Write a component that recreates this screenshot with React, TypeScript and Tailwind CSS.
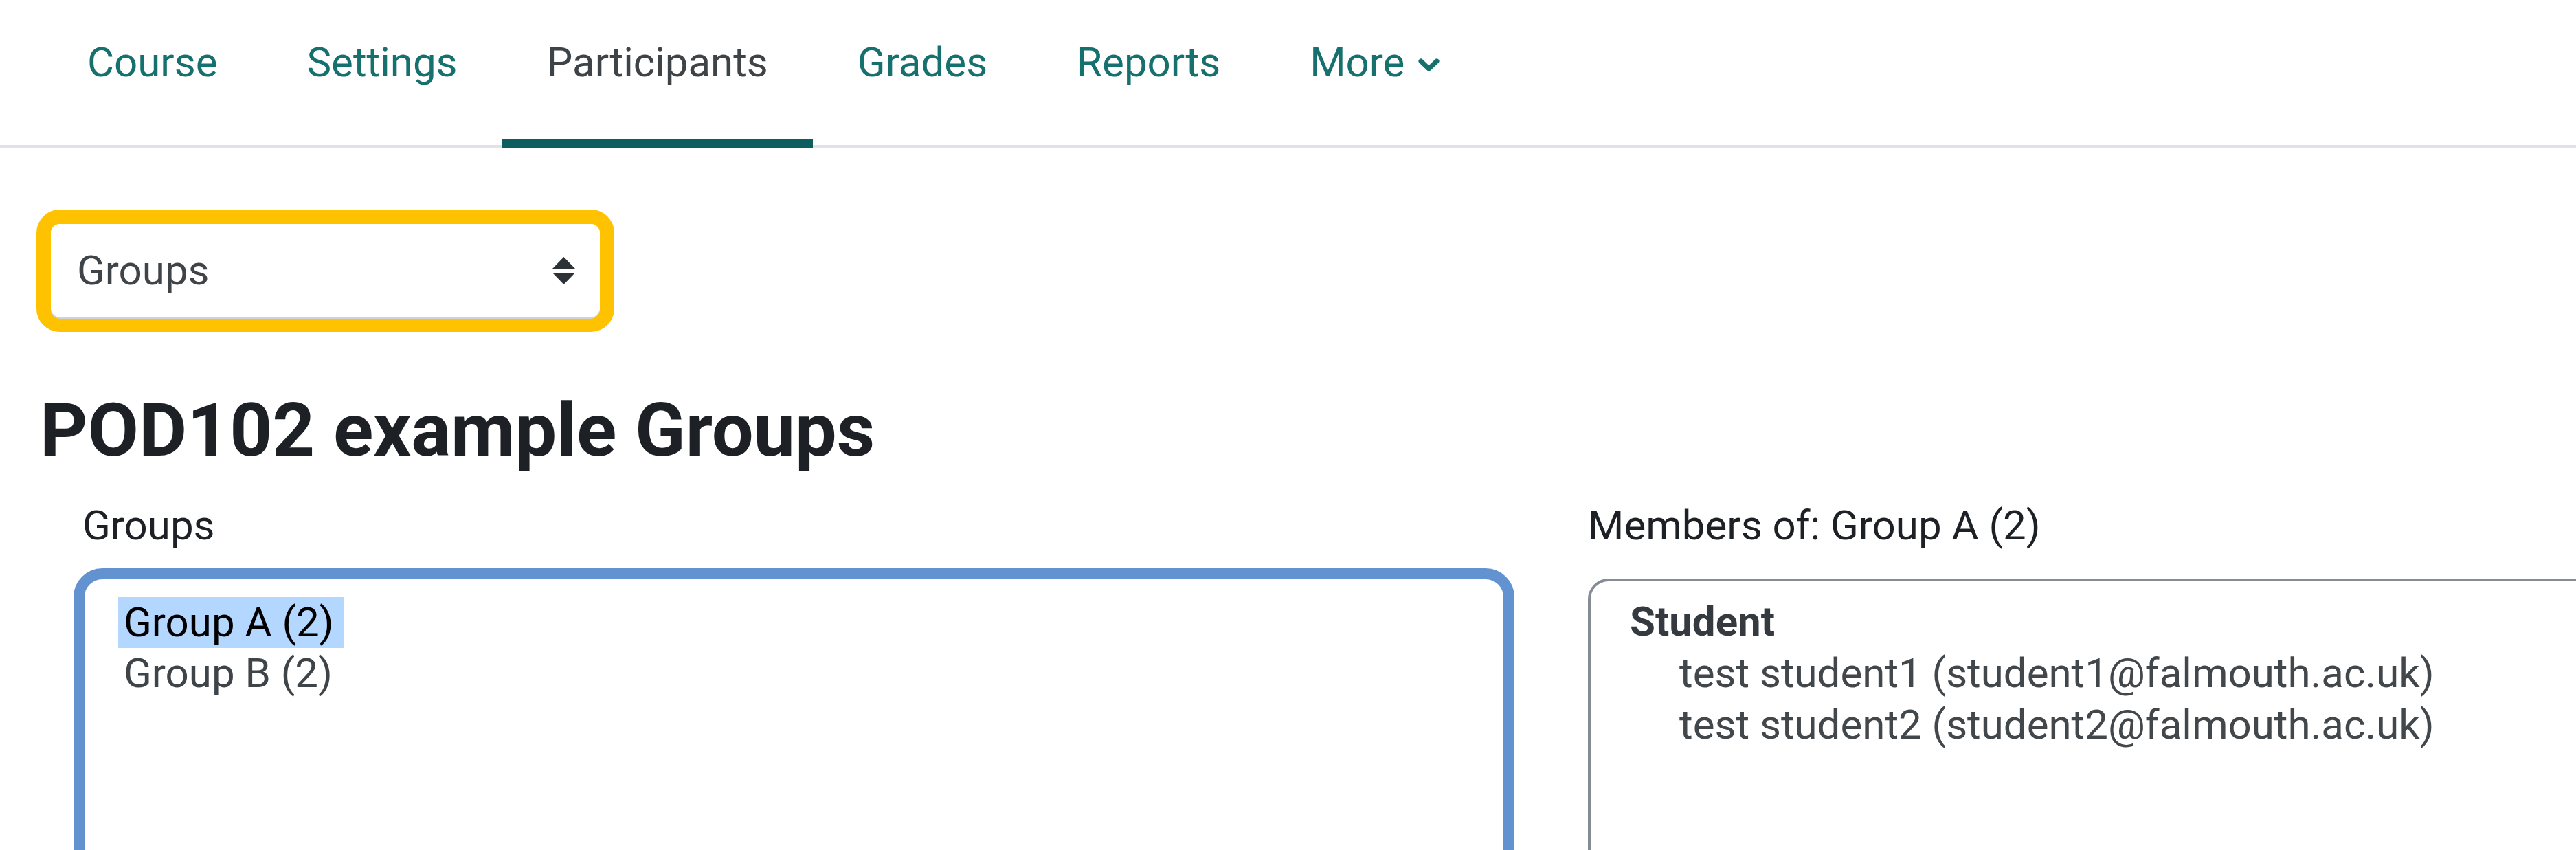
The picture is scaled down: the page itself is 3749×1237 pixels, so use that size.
import React from "react";

const navItems = [
  { label: "Course", active: false },
  { label: "Settings", active: false },
  { label: "Participants", active: true },
  { label: "Grades", active: false },
  { label: "Reports", active: false },
];

const SortArrows: React.FC = () => (
  <svg width="33" height="40" viewBox="0 0 33 40" className="shrink-0">
    <path d="M16.5 0 L33 17 L0 17 Z" fill="#2d3237" />
    <path d="M0 23 L33 23 L16.5 40 Z" fill="#2d3237" />
  </svg>
);

const Chevron: React.FC = () => (
  <svg width="31" height="20" viewBox="0 0 31 20" className="ml-[20px] mt-[8px]">
    <polyline
      points="4,4 15.5,15 27,4"
      fill="none"
      stroke="#16706d"
      strokeWidth="7"
      strokeLinecap="round"
      strokeLinejoin="round"
    />
  </svg>
);

const App: React.FC = () => {
  return (
    <div className="h-[1237px] w-full overflow-hidden bg-white font-['Roboto','Liberation_Sans',sans-serif] text-[60px]">
      {/* secondary navigation */}
      <nav className="flex h-[216px] border-b-[5px] border-[#dfe2e6] pl-[62px]">
        {navItems.map((item) => (
          <div
            key={item.label}
            className={
              item.active
                ? "flex h-[216px] -mb-[5px] px-[65px] pt-[46px] border-b-[13px] border-[#0d5f5f] text-[#3e4348] leading-[90px]"
                : "flex h-[216px] -mb-[5px] px-[65px] pt-[46px] text-[#16706d] leading-[90px]"
            }
          >
            <span>{item.label}</span>
          </div>
        ))}
        <div className="flex h-[216px] -mb-[5px] px-[65px] pt-[46px] text-[#16706d] leading-[90px]">
          <div className="flex h-[90px] items-center">
            <span>More</span>
            <Chevron />
          </div>
        </div>
      </nav>

      {/* groups selector (highlighted) */}
      <div className="mt-[89px] ml-[53px] w-[841px] h-[178px] rounded-[34px] border-[21px] border-[#ffc200]">
        <div className="flex h-full items-center justify-between rounded-[14px] bg-white pl-[38px] pr-[36px] shadow-[0_2px_0_#cfd2d6]">
          <span className="leading-[90px] text-[#3f4449]">Groups</span>
          <SortArrows />
        </div>
      </div>

      <h2 className="mt-[82px] ml-[58px] text-[108px] font-bold leading-[1.14] text-[#1d2125]">
        POD102 example Groups
      </h2>

      <div className="mt-[32px] flex">
        <div className="ml-[107px] w-[2097px] shrink-0">
          <div className="pl-[13px] leading-[90px] text-[#1d2125]">Groups</div>
          <div className="mt-[17px] h-[600px] rounded-[42px] border-[16px] border-[#6293d0] pl-[49px] pt-[26px]">
            <div className="flex flex-col items-start">
              <span className="h-[74px] bg-[#b3d7fe] pl-[8px] pr-[15px] leading-[74px] text-black">
                Group A (2)
              </span>
              <span className="h-[74px] pl-[8px] leading-[74px] text-[#3f4449]">
                Group B (2)
              </span>
            </div>
          </div>
        </div>

        <div className="ml-[107px] w-[1600px] shrink-0">
          <div className="leading-[90px] text-[#1d2125]">Members of: Group A (2)</div>
          <div className="mt-[32px] h-[600px] rounded-[30px] border-[4px] border-[#858c94] pl-[57px] pt-[21px]">
            <div className="font-bold leading-[75px] text-[#343a40]">Student</div>
            <div className="pl-[72px] leading-[75px] text-[#42474c]">
              test student1 (student1@falmouth.ac.uk)
            </div>
            <div className="pl-[72px] leading-[75px] text-[#42474c]">
              test student2 (student2@falmouth.ac.uk)
            </div>
          </div>
        </div>
      </div>
    </div>
  );
};

export default App;
